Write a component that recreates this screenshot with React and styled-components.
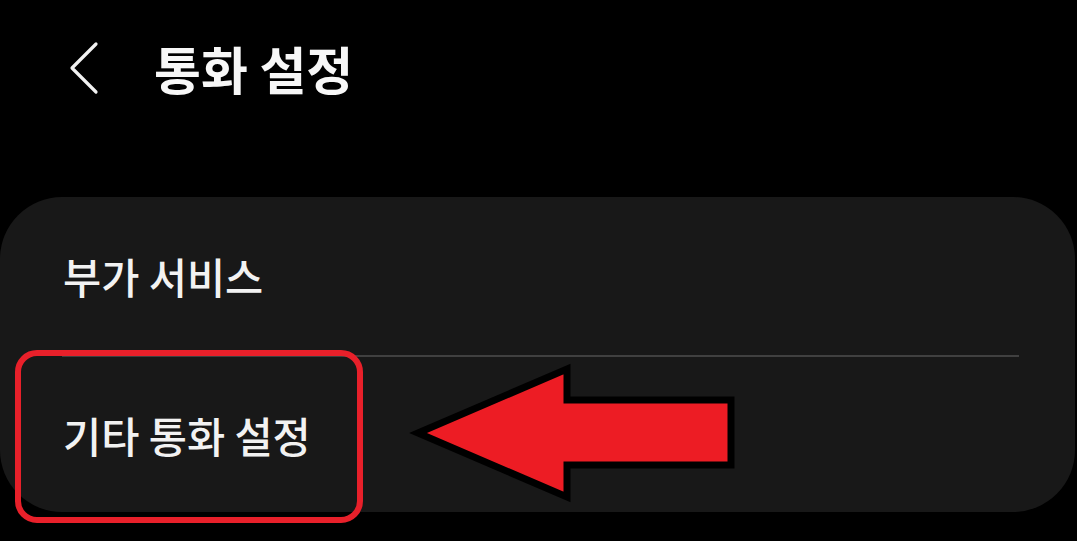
import React from 'react'
import styled, { createGlobalStyle } from 'styled-components'

const GlobalStyle = createGlobalStyle`
  html, body {
    margin: 0;
    padding: 0;
    background: #000;
  }
  body {
    font-family: "Noto Sans CJK KR", "Noto Sans", sans-serif;
    color: #f5f5f5;
  }
`

const Screen = styled.div`
  position: relative;
  width: 1077px;
  height: 541px;
  overflow: hidden;
  background: #000;
`

const Header = styled.div`
  display: flex;
  align-items: center;
  height: 136px;
  padding-left: 68px;
  box-sizing: border-box;
`

const BackButton = styled.button`
  display: flex;
  align-items: center;
  justify-content: center;
  width: 34px;
  height: 54px;
  padding: 0;
  margin-right: 52px;
  border: 0;
  background: none;
  cursor: pointer;
`

const Title = styled.h1`
  margin: 0;
  font-size: 51px;
  font-weight: 700;
  color: #f7f7f7;
`

const Card = styled.div`
  margin-top: 61px;
  width: 1075px;
  height: 315px;
  border-radius: 62px;
  background: #181818;
  display: flex;
  flex-direction: column;
`

const Row = styled.div`
  display: flex;
  align-items: center;
  height: ${(p) => p.h}px;
  padding-left: 63px;
  font-size: 41.5px;
  font-weight: 500;
  color: #f2f2f2;
`

const Divider = styled.div`
  height: 2px;
  margin: 0 56px 0 62px;
  background: #404040;
`

const Highlight = styled.div`
  position: absolute;
  left: 15px;
  top: 350px;
  width: 348px;
  height: 173px;
  box-sizing: border-box;
  border: 6px solid #e8202a;
  border-radius: 22px;
`

const Arrow = styled.svg`
  position: absolute;
  left: 400px;
  top: 355px;
`

const App = () => (
  <Screen>
    <GlobalStyle />
    <Header>
      <BackButton aria-label="back">
        <svg width="34" height="54" viewBox="0 0 34 54">
          <path d="M28 3 L4 27 L28 51" fill="none" stroke="#f2f2f2" strokeWidth="3.2" strokeLinecap="round" strokeLinejoin="round" />
        </svg>
      </BackButton>
      <Title>통화 설정</Title>
    </Header>
    <Card>
      <Row h={158}>부가 서비스</Row>
      <Divider />
      <Row h={155}>기타 통화 설정</Row>
    </Card>
    <Highlight />
    <Arrow width="345" height="155" viewBox="400 355 345 155">
      <path
        d="M418 433 L567 369 L567 400 L731 400 L731 465 L567 465 L567 497 Z"
        fill="#ed1c24"
        stroke="#000"
        strokeWidth="7"
        strokeLinejoin="miter"
      />
    </Arrow>
  </Screen>
)

export default App
